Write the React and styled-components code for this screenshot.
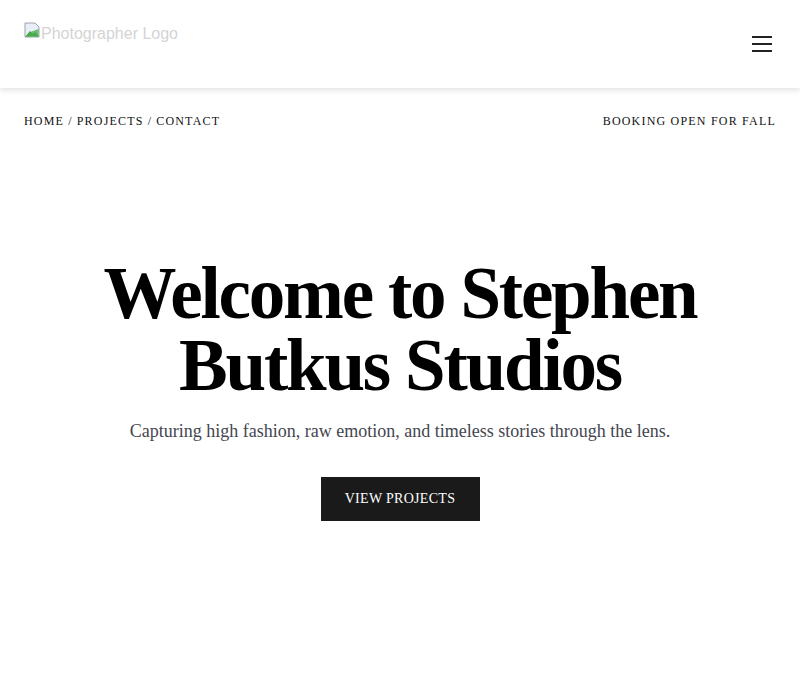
import styled, { createGlobalStyle } from "styled-components";

const GlobalStyle = createGlobalStyle`
  * { box-sizing: border-box; }
  body {
    margin: 0;
    background: #ffffff;
    font-family: "Liberation Serif", "Times New Roman", serif;
    color: #111111;
  }
`;

const Header = styled.header`
  height: 88px;
  display: flex;
  align-items: flex-start;
  justify-content: space-between;
  padding: 22px 24px 0 24px;
  background: #ffffff;
  box-shadow: 0 2px 6px rgba(0, 0, 0, 0.12);
  position: relative;
  z-index: 1;
`;

const Logo = styled.div`
  display: flex;
  align-items: flex-start;
  padding-top: 2px;
  font-family: "Liberation Sans", Arial, sans-serif;
  font-size: 16px;
  line-height: 20px;
  color: #d4d4d4;
`;

const MenuButton = styled.button`
  border: 0;
  background: none;
  padding: 0;
  margin-top: 14px;
  margin-right: 4px;
  width: 20px;
  height: 16px;
  cursor: pointer;
  color: #222222;
`;

const SubBar = styled.div`
  display: flex;
  justify-content: space-between;
  align-items: center;
  padding: 26px 24px 0 24px;
  font-size: 12px;
  letter-spacing: 1.2px;
  text-transform: uppercase;
  color: #111111;
`;

const Crumbs = styled.nav`
  display: flex;
  gap: 4px;
`;

const Crumb = styled.a`
  color: inherit;
  text-decoration: none;
`;

const Hero = styled.main`
  display: flex;
  flex-direction: column;
  align-items: center;
  text-align: center;
  padding-top: 129px;
`;

const Title = styled.h1`
  margin: 0;
  font-size: 73px;
  line-height: 72px;
  font-weight: 700;
  letter-spacing: -2.2px;
  color: #000000;
  max-width: 700px;
`;

const Tagline = styled.p`
  margin: 19px 0 0 0;
  font-size: 18px;
  color: #444650;
`;

const Cta = styled.button`
  margin-top: 35px;
  width: 159px;
  height: 44px;
  border: 0;
  background: #1a1a1a;
  color: #ffffff;
  font-family: "Liberation Serif", "Times New Roman", serif;
  font-size: 14px;
  text-transform: uppercase;
  letter-spacing: 0.3px;
  cursor: pointer;
`;

function BrokenImage() {
  return (
    <svg width="16" height="16" viewBox="0 0 16 16" style={{ marginRight: 1, marginTop: -2 }}>
      <path d="M1 1h10l4 4v10H1z" fill="#e8eef8" stroke="#9aa3ad" strokeWidth="1" />
      <path d="M1.5 14.5L6 9l3 3 2-2 4 4.5z" fill="#3c9a3c" />
      <path d="M1.5 14.5C5 10 9 9 14.5 7v7.5z" fill="#4caf50" opacity="0.8" />
    </svg>
  );
}

function Hamburger() {
  return (
    <svg width="20" height="16" viewBox="0 0 20 16">
      <g stroke="currentColor" strokeWidth="2">
        <line x1="0" y1="1" x2="20" y2="1" />
        <line x1="0" y1="8" x2="20" y2="8" />
        <line x1="0" y1="15" x2="20" y2="15" />
      </g>
    </svg>
  );
}

export default function App() {
  return (
    <>
      <GlobalStyle />
      <Header>
        <Logo>
          <BrokenImage />
          <span>Photographer Logo</span>
        </Logo>
        <MenuButton aria-label="Open menu">
          <Hamburger />
        </MenuButton>
      </Header>
      <SubBar>
        <Crumbs>
          <Crumb href="#">Home</Crumb>
          <span>/</span>
          <Crumb href="#">Projects</Crumb>
          <span>/</span>
          <Crumb href="#">Contact</Crumb>
        </Crumbs>
        <span>Booking open for fall</span>
      </SubBar>
      <Hero>
        <Title>Welcome to Stephen Butkus Studios</Title>
        <Tagline>
          Capturing high fashion, raw emotion, and timeless stories through the lens.
        </Tagline>
        <Cta>View Projects</Cta>
      </Hero>
    </>
  );
}
